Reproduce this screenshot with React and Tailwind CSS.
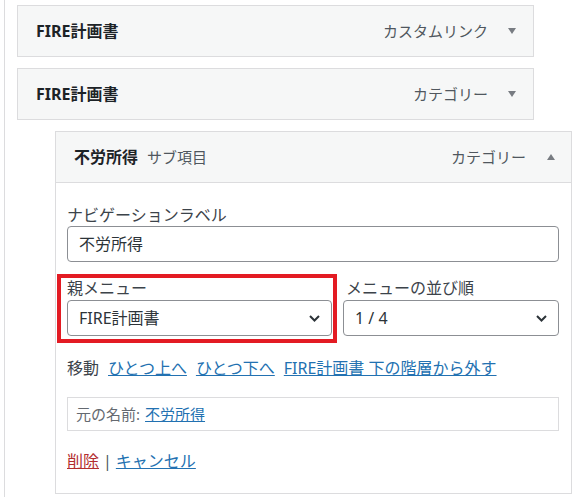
import React from "react";

function Arrow({ up }) {
  return (
    <svg width="8" height="6" viewBox="0 0 8 6" className="shrink-0">
      <polygon points={up ? "0,6 8,6 4,0" : "0,0 8,0 4,6"} fill="#787c82" />
    </svg>
  );
}

function Chevron() {
  return (
    <svg width="11" height="7" viewBox="0 0 11 7" className="shrink-0">
      <path d="M1 1l4.5 4.5L10 1" fill="none" stroke="#2c3338" strokeWidth="2" />
    </svg>
  );
}

function MenuItemBar({ title, type }) {
  return (
    <div className="w-[517px] h-[52px] border border-[#dcdcde] bg-[#f6f7f7] flex items-center pl-[18px] pr-[17px]">
      <span className="font-bold text-[16px] text-[#1d2327]">{title}</span>
      <span className="ml-auto text-[15px] text-[#50575e]">{type}</span>
      <span className="ml-[20px]">
        <Arrow />
      </span>
    </div>
  );
}

function FakeSelect({ value }) {
  return (
    <div className="h-[36px] border border-[#8c8f94] rounded-[4px] bg-white flex items-center pl-[11px] pr-[11px] text-[16px] text-[#2c3338]">
      <span>{value}</span>
      <span className="ml-auto flex">
        <Chevron />
      </span>
    </div>
  );
}

export default function App() {
  return (
    <div className="w-[579px] h-[497px] bg-white overflow-hidden flex font-['Noto_Sans','Noto_Sans_CJK_JP',sans-serif]">
      <div className="w-[4px]" />
      <div className="w-px bg-[#dcdcde]" />
      <div className="pl-[12px] pt-[5px] flex flex-col gap-[11px]">
        <MenuItemBar title="FIRE計画書" type="カスタムリンク" />
        <MenuItemBar title="FIRE計画書" type="カテゴリー" />

        {/* sub item, expanded */}
        <div className="ml-[38px] w-[517px] border border-[#dcdcde]">
          <div className="h-[51px] border-b border-[#dcdcde] bg-[#f6f7f7] flex items-center pl-[18px] pr-[16px]">
            <span className="font-bold text-[16px] text-[#1d2327]">不労所得</span>
            <span className="ml-[9px] text-[15px] text-[#50575e]">サブ項目</span>
            <span className="ml-auto text-[15px] text-[#50575e]">カテゴリー</span>
            <span className="ml-[21px]">
              <Arrow up />
            </span>
          </div>

          <div className="pt-[21px] pb-[21px] pl-[11px] pr-[12px]">
            <div className="text-[16px] leading-[22px] text-[#3c434a]">ナビゲーションラベル</div>
            <div className="h-[36px] border border-[#8c8f94] rounded-[4px] flex items-center pl-[11px] text-[16px] text-[#2c3338]">
              不労所得
            </div>

            <div className="mt-[14px] flex gap-[11px]">
              <div className="relative w-[265px]">
                <div className="text-[16px] leading-[24px] text-[#3c434a]">親メニュー</div>
                <FakeSelect value="FIRE計画書" />
                <div className="absolute left-[-10px] top-[-2px] w-[280px] h-[69px] border-4 border-[#e31b23] pointer-events-none" />
              </div>
              <div className="flex-1">
                <div className="text-[16px] leading-[24px] text-[#3c434a] pl-[3px]">メニューの並び順</div>
                <FakeSelect value="1 / 4" />
              </div>
            </div>

            <div className="mt-[21px] flex gap-[9px] text-[16px] leading-[22px] text-[#3c434a]">
              <span>移動</span>
              <a href="#" className="text-[#2271b1] underline">ひとつ上へ</a>
              <a href="#" className="text-[#2271b1] underline">ひとつ下へ</a>
              <a href="#" className="text-[#2271b1] underline">FIRE計画書 下の階層から外す</a>
            </div>

            <div className="mt-[18px] h-[34px] border border-[#dcdcde] flex items-center pl-[8px] text-[15px] text-[#646970]">
              <span>元の名前:</span>
              <a href="#" className="ml-[5px] text-[#2271b1] underline">不労所得</a>
            </div>

            <div className="mt-[19px] text-[16px] leading-[22px] text-[#50575e]">
              <a href="#" className="text-[#b32d2e] underline">削除</a>
              <span className="mx-[4px]">|</span>
              <a href="#" className="text-[#2271b1] underline">キャンセル</a>
            </div>
          </div>
        </div>
      </div>
    </div>
  );
}
